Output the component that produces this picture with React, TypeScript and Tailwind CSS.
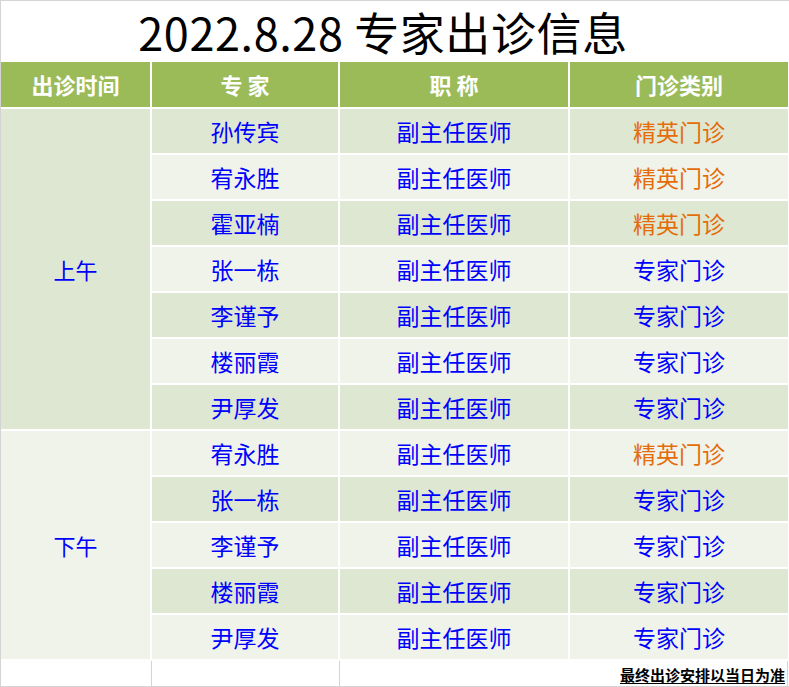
import React from 'react';

type Row = { name: string; title: string; kind: string };

const morning: Row[] = [
  { name: '孙传宾', title: '副主任医师', kind: '精英门诊' },
  { name: '宥永胜', title: '副主任医师', kind: '精英门诊' },
  { name: '霍亚楠', title: '副主任医师', kind: '精英门诊' },
  { name: '张一栋', title: '副主任医师', kind: '专家门诊' },
  { name: '李谨予', title: '副主任医师', kind: '专家门诊' },
  { name: '楼丽霞', title: '副主任医师', kind: '专家门诊' },
  { name: '尹厚发', title: '副主任医师', kind: '专家门诊' },
];

const afternoon: Row[] = [
  { name: '宥永胜', title: '副主任医师', kind: '精英门诊' },
  { name: '张一栋', title: '副主任医师', kind: '专家门诊' },
  { name: '李谨予', title: '副主任医师', kind: '专家门诊' },
  { name: '楼丽霞', title: '副主任医师', kind: '专家门诊' },
  { name: '尹厚发', title: '副主任医师', kind: '专家门诊' },
];

const font = { fontFamily: '"Noto Sans CJK SC", "Microsoft YaHei", sans-serif' };

export default function App() {
  const all = [...morning, ...afternoon];

  return (
    <div
      className="w-[789px] h-[687px] bg-white border-t border-l border-b border-[#d4d4d4] overflow-hidden"
      style={font}
    >
      {/* title */}
      <div className="h-[61px] flex items-center justify-center pr-[24px]">
        <span className="text-[45px] leading-none text-black tracking-[0.6px]">2022.8.28 专家出诊信息</span>
      </div>

      <div className="grid grid-cols-[149px_186px_228px_218px] grid-rows-[45px_repeat(12,44px)] gap-[2px]">
        {['出诊时间', '专 家', '职 称', '门诊类别'].map((h) => (
          <div
            key={h}
            className="bg-[#9bbb59] text-white font-bold text-[22px] flex items-center justify-center whitespace-pre"
          >
            {h}
          </div>
        ))}

        <div className="row-span-7 col-start-1 bg-[#dee7d1] flex items-center justify-center text-[22px] text-[#0000ff]">
          上午
        </div>
        <div className="row-span-5 col-start-1 bg-[#eff3ea] flex items-center justify-center text-[22px] text-[#0000ff]">
          下午
        </div>

        {all.map((r, i) => {
          const bg = i % 2 === 0 ? 'bg-[#dee7d1]' : 'bg-[#eff3ea]';
          const rowCls = [
            'row-start-2', 'row-start-3', 'row-start-4', 'row-start-5', 'row-start-6', 'row-start-7',
            'row-start-8', 'row-start-9', 'row-start-10', 'row-start-11', 'row-start-12', 'row-start-13',
          ][i];
          return (
            <React.Fragment key={i}>
              <div className={`${bg} ${rowCls} col-start-2 flex items-center justify-center text-[23px] text-[#0000ff]`}>
                {r.name}
              </div>
              <div className={`${bg} ${rowCls} col-start-3 flex items-center justify-center text-[23px] text-[#0000ff]`}>
                {r.title}
              </div>
              <div
                className={`${bg} ${rowCls} col-start-4 flex items-center justify-center text-[23px] ${
                  r.kind === '精英门诊' ? 'text-[#e46c0a]' : 'text-[#0000ff]'
                }`}
              >
                {r.kind}
              </div>
            </React.Fragment>
          );
        })}
      </div>

      {/* footer note */}
      <div className="h-[27px] pt-[2px] grid grid-cols-[151px_188px_448px]">
        <div className="border-r border-[#d4d4d4]" />
        <div className="border-r border-[#d4d4d4]" />
        <div className="border-r border-[#d4d4d4] flex items-end justify-end pr-[2px] pb-[2px]">
          <span className="text-[15px] leading-[18px] font-bold text-black underline underline-offset-2">
            最终出诊安排以当日为准
          </span>
        </div>
      </div>
    </div>
  );
}
